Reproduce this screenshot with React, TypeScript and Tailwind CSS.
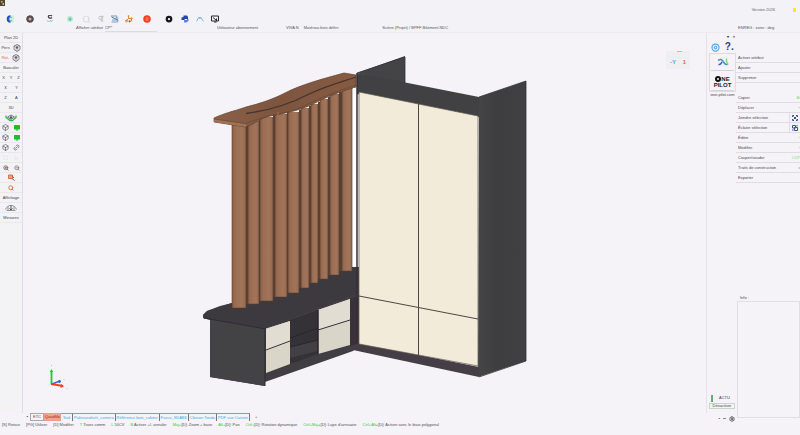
import type { ReactNode } from 'react'
import {
  Axis3d,
  Box,
  Link2,
  Maximize,
  Pilcrow,
  Search,
  Settings,
  ZoomIn,
  ZoomOut,
} from 'lucide-react'

const slats = [
  { x: 232, w: 14, top: 124, bottom: 308 },
  { x: 248, w: 11, top: 121, bottom: 304 },
  { x: 260, w: 13, top: 117, bottom: 301 },
  { x: 275, w: 12, top: 114, bottom: 297 },
  { x: 288, w: 11, top: 112, bottom: 293 },
  { x: 301, w: 8, top: 108, bottom: 288 },
  { x: 311, w: 7, top: 104, bottom: 283 },
  { x: 320, w: 8, top: 99, bottom: 279 },
  { x: 330, w: 9, top: 94, bottom: 275 },
  { x: 342, w: 10, top: 88, bottom: 271 },
]

const tabs = [
  'Palissandre/s_camera',
  'Référence bois_cabine',
  'Fusco_SDAB6',
  'Cloison Tonda',
  'PDF vue Cuisine',
]

const hints = [
  { keys: '', text: '[S] Retour' },
  { keys: '', text: '[PG] Utiliser' },
  { keys: '', text: '[D] Modifier' },
  { keys: 'T', text: ' Trans comm' },
  { keys: 'L', text: ' 50CV' },
  { keys: 'B', text: ' Activer +/- annuler' },
  { keys: 'Maj+', text: '[D]: Zoom + base' },
  { keys: 'Alt+', text: '[D]: Pan' },
  { keys: 'Ctrl+', text: '[D]: Rotation dynamique' },
  { keys: 'Ctrl+Maj', text: '+[D]: Lupe d’annuaire' },
  { keys: 'Ctrl+Alt', text: '+[D]: Activer avec le biais polygonal' },
]

const editActions = [
  { label: 'Copier', mark: '⌘' },
  { label: 'Déplacer', mark: '•' },
  { label: 'Joindre sélection', icon: 'join' },
  { label: 'Éclater sélection', icon: 'split' },
  { label: 'Éditer', mark: '›' },
  { label: 'Modifier', mark: '›' },
  { label: 'Couper/souder', mark: 'CUT' },
  { label: 'Traits de construction', mark: '◂' },
  { label: 'Exporter' },
]

function ToolRow({ children }: { children: ReactNode }) {
  return (
    <div className="flex h-[10px] items-center justify-around border-b border-[#eae8ed] text-[#454349]">
      {children}
    </div>
  )
}

function Tool({ label, children }: { label: string; children: ReactNode }) {
  return (
    <button aria-label={label} className="flex items-center justify-center">
      {children}
    </button>
  )
}

function GreenScreen() {
  return (
    <svg className="size-[6px]" viewBox="0 0 12 12">
      <rect x="0" y="0" width="12" height="9" rx="1" fill="#12c524" />
      <path d="M4 9h4v2H4z" fill="#3a9d44" />
    </svg>
  )
}

function ViewCube() {
  return (
    <svg className="size-2" viewBox="0 0 16 16" fill="none" stroke="#66646a" strokeWidth="1.500">
      <path d="M8 1l6 3v7l-6 4-6-4V4z" />
      <path d="M2 4l6 4 6-4M8 8v7M5 2l6 9M11 2L5 11" strokeWidth="1" />
      <circle cx="8" cy="7" r="1.500" fill="#4b494f" />
    </svg>
  )
}

function SelectionIcon({ split }: { split: boolean }) {
  return (
    <svg className="size-[6px]" viewBox="0 0 12 12" stroke="#3d5283" strokeWidth="2" fill="none">
      {split ? (
        <path d="M1 1h6v5H1zM5 5h6v6H5zM10 0v3M0 10h3" />
      ) : (
        <path d="M1 4V1h3M8 1h3v3M11 8v3H8M4 11H1V8M3 3l6 6M9 3L3 9" />
      )}
    </svg>
  )
}

function Header() {
  return (
    <header className="shrink-0 bg-[#f3f2f6]">
      <div className="flex h-[14px] items-start justify-between pr-1">
        <svg className="h-[6px] w-[5px]" viewBox="0 0 10 12">
          <rect width="10" height="12" fill="#4f483b" />
          <path d="M2 2h3v3H2zM5 6h3v4H5z" fill="#d6b353" />
        </svg>
        <div className="flex items-center gap-[18px] pt-[7px] text-[#66646a]">
          <span>Version 2026</span>
          <span className="h-[4px] w-[3px] bg-[#f5ed22]" />
        </div>
      </div>
      <div className="flex h-[10px] items-center pl-[6px]">
        <nav className="flex items-center gap-3">
          <Tool label="Espace client">
            <svg className="size-2" viewBox="0 0 16 16" fill="none">
              <rect x="9" y="1" width="7" height="14" fill="#cdeed7" />
              <path d="M9 2.500a5.500 5.500 0 1 0 0 11" stroke="#244fb5" strokeWidth="4" />
              <path d="M12 5a3.500 3.500 0 1 0 0 6" stroke="#67aee8" strokeWidth="2" />
            </svg>
          </Tool>
          <Tool label="Paramètres">
            <svg className="size-2" viewBox="0 0 16 16">
              <circle cx="8" cy="8" r="5" fill="#e6a293" stroke="#514d50" strokeWidth="4" />
              <circle cx="8" cy="8" r="7" fill="none" stroke="#514d50" strokeWidth="1.500" strokeDasharray="3 2" />
            </svg>
          </Tool>
          <Tool label="Caméra">
            <svg className="size-2" viewBox="0 0 16 16" fill="none">
              <path d="M12 2C8-1 4 1 5 4s5 3 7 1" stroke="#454348" strokeWidth="2.500" />
              <path d="M2 11l3 3 3-3 3 2 2-3" stroke="#78b9ed" strokeWidth="2" />
            </svg>
          </Tool>
          <Tool label="Rendu">
            <svg className="size-2" viewBox="0 0 16 16">
              <circle cx="8" cy="8" r="6" fill="#b8ead1" />
              <circle cx="8" cy="8" r="3" fill="#4cc5cb" />
              <circle cx="5" cy="6" r="2" fill="#d2e781" />
            </svg>
          </Tool>
        </nav>
        <nav className="ml-2 flex items-center gap-[6px]">
          <Tool label="Rechercher"><Search size={9} strokeWidth={2} className="text-[#d3d1d6]" /></Tool>
          <Tool label="Texte"><Pilcrow size={8} strokeWidth={2} className="text-[#b7b5ba]" /></Tool>
          <Tool label="Couches">
            <svg className="size-2" viewBox="0 0 16 16" fill="none" strokeWidth="2">
              <path d="M0 2h12l-2 4h5M2 10h12l-1 4H1" stroke="#7b9dc2" />
              <path d="M1 4l13 6" stroke="#4f75aa" />
            </svg>
          </Tool>
          <Tool label="Assemblage">
            <svg className="size-2" viewBox="0 0 16 16" fill="none" stroke="#d88b45" strokeWidth="2">
              <path d="M7 2v5h6v5H8M7 7L2 12" />
              <circle cx="7" cy="2" r="1" />
              <circle cx="13" cy="7" r="1.500" />
              <circle cx="3" cy="12" r="2" />
              <circle cx="9" cy="13" r="1" stroke="#6c4a32" />
            </svg>
          </Tool>
        </nav>
        <nav className="ml-[10px] flex items-center gap-[14px]">
          <Tool label="Enregistrer">
            <svg className="size-2" viewBox="0 0 16 16" fill="none">
              <circle cx="8" cy="8" r="7.500" fill="#ee4026" />
              <path d="M5 6h6M5 10h6M8 4v8" stroke="#ffb49a" strokeWidth="1" />
            </svg>
          </Tool>
          <Tool label="Cible">
            <svg className="size-2" viewBox="0 0 16 16">
              <circle cx="8" cy="8" r="4.500" fill="#fff" stroke="#17161a" strokeWidth="4.500" />
            </svg>
          </Tool>
        </nav>
        <nav className="ml-2 flex items-center gap-[7px]">
          <Tool label="Script">
            <svg className="size-2" viewBox="0 0 16 16">
              <path d="M5 1h7l2 3v4H7v2H1V5l4-1z" fill="#2447a5" />
              <path d="M12 8h3v4l-4 3H6v-5h6z" fill="#6286d4" />
            </svg>
          </Tool>
          <Tool label="Nuage">
            <svg className="size-2" viewBox="0 0 16 16" fill="none" stroke="#7db8ee" strokeWidth="2">
              <path d="M1 13l4-8h5l5 8M5 7l6-1" />
            </svg>
          </Tool>
          <Tool label="Présentation">
            <svg className="size-2" viewBox="0 0 16 16" fill="none" stroke="#29272c" strokeWidth="2">
              <path d="M1 2h14v10H1z" />
              <path d="M4 5l7 6M11 7v5M6 14h5" />
            </svg>
          </Tool>
        </nav>
      </div>
      <div className="flex h-[9px] items-center border-b border-[#edebf0] pl-[76px] text-[#56545a]">
        <label htmlFor="attribut" className="italic">Afficher attribut</label>
        <select
          id="attribut"
          defaultValue="CP"
          className="ml-[2px] h-[8px] w-[52px] appearance-none border-b border-[#dddbe1] italic leading-[6px]"
        >
          <option value="CP">CP*</option>
        </select>
        <span className="ml-[60px]">Utilisateur abonnement</span>
        <span className="ml-[28px]">VIVA N</span>
        <span className="ml-[5px]">Matériau bois défini</span>
        <span className="ml-[44px]">Scène (Projet) / BPFF Bâtiment.NDC</span>
        <span className="ml-auto w-[62px]">ENREG : zone : deg</span>
      </div>
    </header>
  )
}

function LeftToolbar() {
  return (
    <aside className="w-[23px] shrink-0 border-r border-[#e0dee4] bg-[#f3f2f5]">
      <ToolRow><button>Plan 2D</button></ToolRow>
      <ToolRow>
        <button>Pers</button>
        <Tool label="Vue perspective"><ViewCube /></Tool>
      </ToolRow>
      <ToolRow>
        <button className="text-[#f3613b]">Rot.</button>
        <Tool label="Rotation"><ViewCube /></Tool>
      </ToolRow>
      <ToolRow><button>Basculer</button></ToolRow>
      <ToolRow><button>X</button><button>Y</button><button>Z</button></ToolRow>
      <ToolRow><button>X</button><button>Y</button></ToolRow>
      <ToolRow><button>Z</button><button>A</button></ToolRow>
      <ToolRow><button>3D</button></ToolRow>
      <ToolRow>
        <Tool label="Visibilité">
          <svg className="h-2 w-3" viewBox="0 0 24 16" fill="none">
            <path d="M2 3v4l8 6h5l7-6V3" stroke="#38b450" strokeWidth="2.500" />
            <path d="M5 6l7-4 7 4-7 5z" stroke="#4c5550" strokeWidth="1.500" />
            <circle cx="12" cy="7" r="2.500" fill="#4c5550" />
          </svg>
        </Tool>
      </ToolRow>
      <ToolRow>
        <Tool label="Cube"><Box size={7} /></Tool>
        <Tool label="Écran 1"><GreenScreen /></Tool>
      </ToolRow>
      <ToolRow>
        <Tool label="Volume"><Box size={7} /></Tool>
        <Tool label="Écran 2"><GreenScreen /></Tool>
      </ToolRow>
      <ToolRow>
        <Tool label="Solide"><Box size={7} /></Tool>
        <Tool label="Lier"><Link2 size={7} className="-rotate-45" /></Tool>
      </ToolRow>
      <ToolRow>
        <Tool label="Cadre"><Maximize size={5} className="text-[#dddbe0]" /></Tool>
        <Tool label="Axes"><Axis3d size={5} className="text-[#dddbe0]" /></Tool>
      </ToolRow>
      <ToolRow>
        <Tool label="Zoom avant"><ZoomIn size={6} strokeWidth={3} className="text-[#735d5d]" /></Tool>
        <Tool label="Zoom arrière"><ZoomOut size={6} strokeWidth={3} className="text-[#8c7474]" /></Tool>
      </ToolRow>
      <ToolRow>
        <Tool label="Zoom fenêtre">
          <svg className="size-[7px]" viewBox="0 0 14 14" fill="none" strokeWidth="2">
            <path d="M1 2h8v7H1z" fill="#f4a17d" stroke="#dc6a45" />
            <path d="M8 4l4 4M8 9l5 4" stroke="#b65434" />
          </svg>
        </Tool>
      </ToolRow>
      <ToolRow><Tool label="Zoom total"><Search size={6} strokeWidth={4} className="text-[#dd7b54]" /></Tool></ToolRow>
      <ToolRow><button>Affichage</button></ToolRow>
      <ToolRow>
        <Tool label="Œil">
          <svg className="h-2 w-3" viewBox="0 0 24 16" fill="none" stroke="#77757b" strokeWidth="1.500">
            <path d="M1 11C5 0 19 0 23 11M3 13h18M6 5v7M18 5v7" />
            <path d="M12 3v9M9 9l3 3 3-3" stroke="#55535a" strokeWidth="2" />
          </svg>
        </Tool>
      </ToolRow>
      <ToolRow><button>Mesures</button></ToolRow>
    </aside>
  )
}

function FurnitureModel() {
  return (
    <svg className="block h-full w-full" viewBox="23 33 683 380" role="img" aria-label="Dressing et banc">
      <defs>
        <linearGradient id="slat">
          <stop offset="0" stopColor="#8a5f47" />
          <stop offset=".25" stopColor="#9b6e54" />
          <stop offset=".7" stopColor="#a2755b" />
          <stop offset="1" stopColor="#93684e" />
        </linearGradient>
        <linearGradient id="side">
          <stop offset="0" stopColor="#454446" />
          <stop offset=".4" stopColor="#3e3d3f" />
          <stop offset="1" stopColor="#403f41" />
        </linearGradient>
        <linearGradient id="shelf">
          <stop offset="0" stopColor="#8c6047" />
          <stop offset=".45" stopColor="#7d553f" />
          <stop offset="1" stopColor="#875b43" />
        </linearGradient>
      </defs>

      {/* bench */}
      <path d="M203 315l4-4 13-5 12-3 121-36h6v79l-6 5-88 31v4l-55-9v-57l-7-2z" fill="#403e43" />
      <path d="M210 319l55 10v57l-55-9z" fill="#434245" />
      <path d="M203 315l4-4 25-8 121-36h5v26l-92 35-63-10z" fill="#3c3a3e" />
      <path d="M204 318l62 11 92-32" fill="none" stroke="#2f2d32" />
      <path d="M290 321l28-11v44l-28 10z" fill="#343137" />
      <path d="M290 347l28-7v11l-28 7z" fill="#423f45" />
      <path d="M290 338l28-10M290 347l28-7" stroke="#29272c" />
      <path d="M266 328.500l24-7.500v43l-24 9z" fill="#dad5c9" />
      <path d="M318 310l32-11v46l-32 9z" fill="#dad5c9" />
      <path d="M318 310l32-11v21l-32 10zM266 329l24-8v20l-24 9z" fill="#e2ddd3" />
      <path d="M266 350l24-9M318 330l32-10" stroke="#35323a" />
      <path d="M318 310v44" stroke="#27252a" strokeWidth="1.500" />
      <path d="M350 299l8-3v50l-8 3z" fill="#3b3239" />
      <path d="M265 328v58" stroke="#2d2c30" />

      {/* slats, with the dark return visible between each pair */}
      {slats.map(({ x, w, top, bottom }, i) => (
        <g key={x}>
          {i < slats.length - 1 && (
            <rect x={x + w} y={top - 2} width={slats[i + 1].x - x - w} height={slats[i + 1].bottom - top + 2} fill="#5a4035" />
          )}
          <rect x={x} y={top} width={w} height={bottom - top} fill="url(#slat)" />
          <path d={`M${x} ${top}V${bottom}h${w}V${top}`} fill="none" stroke="#59402f" strokeWidth=".6" />
        </g>
      ))}

      {/* curved top shelf */}
      <path d="M214 118C225 113 231 112 246 107C262 103 273 99 285 93C300 85 322 79 344 73L356 75V87C343 91 331 95 319 101C303 110 287 113 270 116C260 118 253 125 246 127L214 122z" fill="url(#shelf)" stroke="#5e4232" strokeWidth=".7" />
      <path d="M214 119l32 5v3l-32-5z" fill="#a07155" />
      <path d="M214 119l32 4.500C266 115 285 114 302 107C320 98 335 92 356 85" fill="none" stroke="#63442f" strokeWidth=".6" />
      <path d="M246 113.500C272 110 294 102 309 94C326 86 341 82 356 77" fill="none" stroke="#4a332a" strokeWidth="1.300" />
      <path d="M278 112v4" stroke="#a47759" />

      {/* wardrobe */}
      <path d="M353 88h3v178h-3z" fill="#fff" />
      <path d="M357 73l48-17v30z" fill="#444345" />
      <path d="M479 97l47-16v280l-48 16z" fill="url(#side)" />
      <path d="M357 73l122 24v20L357 94z" fill="#414042" />
      <path d="M357 73v273" stroke="#343137" strokeWidth="1.500" />
      <path d="M351 346l8-3 120 24v10l-126-27-14 3z" fill="#463e46" />
      <path d="M359 92l119 24v250l-119-22z" fill="#f3ebd9" />
      <path d="M418.500 104v252M359 296l119 23" fill="none" stroke="#4b4742" />
      <path d="M359 92l119 24v250l-119-22z" fill="none" stroke="#5d5850" strokeWidth=".7" />
      <path d="M357 73l48-16v26M479 97l47-16v280l-47 16" fill="none" stroke="#343336" strokeWidth=".8" />
    </svg>
  )
}

function Viewport() {
  return (
    <main className="relative min-w-0 flex-1">
      <FurnitureModel />
      <div className="absolute top-[18px] right-4 flex h-[18px] w-6 items-center justify-between bg-[#efeef1] px-[4px] pt-[3px] font-bold">
        <span className="absolute top-0 left-[11px] h-px w-[5px] bg-[#8fdc92]" />
        <span className="text-[6px] text-[#45b4e2]">-Y</span>
        <span className="text-[6px] text-[#ed604b]">1</span>
      </div>
      <svg className="absolute bottom-[24px] left-[26px] h-[24px] w-5" viewBox="0 0 20 24" fill="none">
        <path d="M2.500 19V6" stroke="#1fc82b" strokeWidth="1.800" />
        <path d="M.8 7l1.700-3L4.200 7z" fill="#1fc82b" />
        <path d="M3 19l8-3" stroke="#3b6bce" strokeWidth="1.500" />
        <circle cx="10.500" cy="16.500" r="1.400" fill="#3263cb" />
        <path d="M2 19l12 2" stroke="#f04022" strokeWidth="1.800" />
        <path d="M12 19l3 2.200-3.500 1.700z" fill="#f04022" />
        <path d="M2.500 0v1M15 14v1M18 23v1" stroke="#a7d7a7" />
      </svg>
    </main>
  )
}

function Dock() {
  return (
    <aside className="flex w-[30px] shrink-0 flex-col border-l border-[#e4e2e8] pl-[2px] text-[#454349]">
      <div className="flex h-2 items-center justify-end gap-[4px] pr-[1px] font-bold">
        <button aria-label="Épingler">▾</button>
        <button aria-label="Fermer">×</button>
      </div>
      <div className="flex h-3 items-center justify-around">
        <Tool label="Réglages">
          <svg className="size-[9px]" viewBox="0 0 18 18" fill="none">
            <circle cx="9" cy="9" r="7" stroke="#5aa6e7" strokeWidth="2.500" />
            <circle cx="9" cy="9" r="2.500" stroke="#3f80cc" strokeWidth="2" />
          </svg>
        </Tool>
        <button className="text-[10px] leading-none font-bold text-[#2b4583]">?.</button>
      </div>
      <div className="flex flex-col gap-[2px] border border-[#dedce2] px-[1px]">
        <button aria-label="Courbes" className="flex h-[17px] items-center justify-center border-b border-[#d4d2d9]">
          <svg className="h-[9px] w-3" viewBox="0 0 24 18" fill="none" strokeWidth="3">
            <path d="M2 5c5-4 8-2 11 3 3 5 6 6 9 4" stroke="#3d9ac4" />
            <path d="M3 13c5 1 5-2 7-5" stroke="#345caf" />
            <path d="M19 1v6l3 6" stroke="#80dd87" />
          </svg>
        </button>
        <button className="flex h-[18px] flex-col items-center justify-center border-b border-[#d4d2d9] text-[6px] leading-[6px] font-black text-[#222024]">
          <span className="flex items-center">
            <svg className="size-[6px]" viewBox="0 0 12 12">
              <circle cx="6" cy="6" r="4" fill="#f5f3f7" stroke="#111013" strokeWidth="4" />
            </svg>
            NE
          </span>
          <span>PILOT</span>
        </button>
      </div>
      <a href="#one-pilot" className="text-center leading-[6px] whitespace-nowrap">one-pilot.com</a>
      <div className="mt-auto flex h-2 items-center gap-[6px] pl-[2px]">
        <span className="h-[7px] w-[2px] bg-[#61ad7c]" />
        <span>ACTU</span>
      </div>
      <button className="mt-[1px] mr-px h-[6px] border border-[#c4d8c8] leading-none">Désactiver</button>
      <div className="mb-[-9px] flex h-[13px] items-center justify-end gap-[3px] pt-[6px] pr-[1px]">
        <span>▪</span><span>▪▪</span>
        <Tool label="Options"><Settings size={6} strokeWidth={3} /></Tool>
      </div>
    </aside>
  )
}

function ActionMenu() {
  return (
    <aside className="flex w-16 shrink-0 flex-col pt-[20px] text-[#49474e]">
      {['Activer attribut', 'Ajouter', 'Supprimer'].map((label) => (
        <button key={label} className="h-[10px] border-b border-[#dfdde3] pl-[2px] text-left">{label}</button>
      ))}
      <div className="h-[10px]" />
      {editActions.map(({ label, mark, icon }) => (
        <button key={label} className="flex h-[10px] items-center justify-between border-b border-[#dfdde3] pl-[2px]">
          <span className="whitespace-nowrap">{label}</span>
          {icon && (
            <span className="flex h-full w-[11px] items-center justify-center border-l border-[#dfdde3]">
              <SelectionIcon split={icon === 'split'} />
            </span>
          )}
          {mark && <span className="text-[#72d87b]">{mark}</span>}
        </button>
      ))}
      <label htmlFor="info" className="mt-auto h-[6px] pl-1">Info :</label>
      <textarea id="info" readOnly className="mb-[-5px] ml-[1px] h-[117px] resize-none border border-[#e1dfe5]" />
    </aside>
  )
}

function Footer() {
  return (
    <footer className="h-[22px] shrink-0 text-[#525056]">
      <nav className="flex h-2 items-stretch pl-[25px] whitespace-nowrap">
        <button className="w-[5px] text-[#333136]">▪</button>
        <button className="border border-[#aaa8ad] px-[2px]">ETC</button>
        <button className="border border-[#ee9d8b] bg-[#f3a491] text-[#8e2f20]">Quadfilo</button>
        <button className="border-t border-r border-t-[#de7e70] border-r-[#77757a] px-[2px] text-[#35aee6]">Sud</button>
        {tabs.map((tab) => (
          <button key={tab} className="border-t border-r border-t-[#de7e70] border-r-[#77757a] px-[1px] text-[#35aee6]">
            {tab}
          </button>
        ))}
        <button className="ml-[5px]">+</button>
      </nav>
      <div className="flex h-2 items-center gap-[6px] pl-[2px] whitespace-nowrap">
        {hints.map(({ keys, text }) => (
          <span key={keys + text}>
            <span className="text-[#36c83f]">{keys}</span>
            {text}
          </span>
        ))}
      </div>
    </footer>
  )
}

export default function App() {
  return (
    <div className="flex h-screen flex-col overflow-hidden bg-[#f5f3f7] font-['Liberation_Sans',sans-serif] text-[4px] leading-[6px]">
      <Header />
      <div className="flex min-h-0 flex-1">
        <LeftToolbar />
        <Viewport />
        <Dock />
        <ActionMenu />
      </div>
      <Footer />
    </div>
  )
}
